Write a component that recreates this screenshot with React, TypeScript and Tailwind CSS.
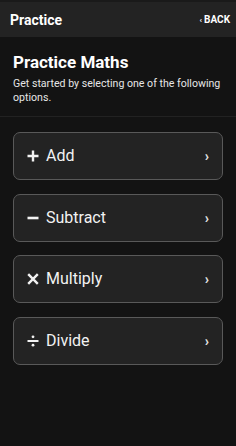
import React from 'react';

type Op = { label: string; icon: React.ReactNode };

const PlusIcon = () => (
    <svg viewBox="0 0 12 12" className="w-3 h-3" fill="none" stroke="currentColor" strokeWidth={2.4}>
        <path d="M6 0.5v11M0.5 6h11" />
    </svg>
);

const MinusIcon = () => (
    <svg viewBox="0 0 12 12" className="w-3 h-3" fill="none" stroke="currentColor" strokeWidth={2.6}>
        <path d="M0.5 6h11" />
    </svg>
);

const TimesIcon = () => (
    <svg viewBox="0 0 12 12" className="w-3 h-3" fill="none" stroke="currentColor" strokeWidth={2.4}>
        <path d="M1.2 1.2l9.6 9.6M10.8 1.2l-9.6 9.6" />
    </svg>
);

const DivideIcon = () => (
    <svg viewBox="0 0 12 12" className="w-3 h-3" fill="currentColor">
        <rect x="0.5" y="5" width="11" height="2" />
        <circle cx="6" cy="1.8" r="1.4" />
        <circle cx="6" cy="10.2" r="1.4" />
    </svg>
);

const ops: Op[] = [
    { label: 'Add', icon: <PlusIcon /> },
    { label: 'Subtract', icon: <MinusIcon /> },
    { label: 'Multiply', icon: <TimesIcon /> },
    { label: 'Divide', icon: <DivideIcon /> },
];

const OpCard: React.FC<Op> = ({ label, icon }) => (
    <button className="w-full h-[48px] flex items-center pl-[13px] pr-[13px] rounded-[7px] border border-[#595959] bg-[#232323] text-[#f2f2f2]">
        <span className="flex items-center justify-center w-3 h-3">{icon}</span>
        <span className="ml-[7px] text-[16px] leading-none">{label}</span>
        <span className="ml-auto text-[14px] font-black leading-none text-[#e0e0e0]">›</span>
    </button>
);

export default function App() {
    return (
        <div className="w-[236px] h-[446px] bg-[#131313] text-white flex flex-col" style={{ fontFamily: 'Roboto, "Liberation Sans", sans-serif' }}>
            <header className="h-[37px] shrink-0 bg-[#232323] border-t-2 border-[#1a1a1a] flex items-center justify-between pl-[10px] pr-[6px]">
                <h1 className="text-[14px] font-bold leading-none">Practice</h1>
                <button className="flex items-center gap-[2px] text-[10px] font-bold leading-none text-white">
                    <span className="text-[8px]">‹</span>
                    BACK
                </button>
            </header>

            <section className="pl-[13px] pr-[8px] pt-[15px] pb-[11px] border-b border-[#222]">
                <h2 className="text-[17px] font-bold leading-[20px]">Practice Maths</h2>
                <p className="mt-[5px] text-[10.6px] leading-[14px] text-[#e6e6e6]">
                    Get started by selecting one of the following options.
                </p>
            </section>

            <div className="flex flex-col gap-[13.5px] px-[13px] pt-[15px]">
                {ops.map((op) => (
                    <OpCard key={op.label} {...op} />
                ))}
            </div>
        </div>
    );
}
